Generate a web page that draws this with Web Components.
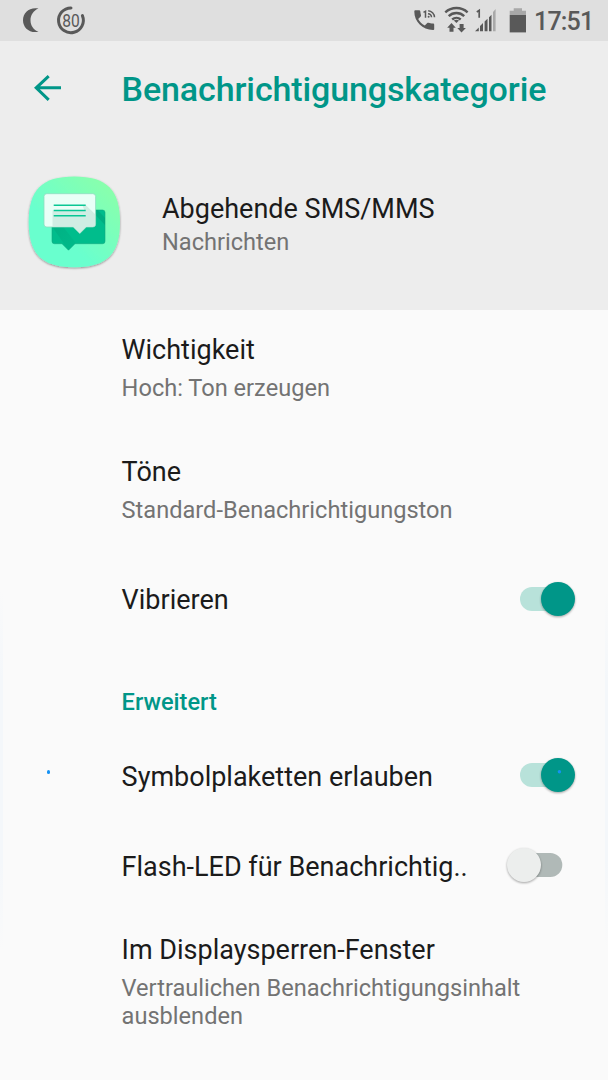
<!DOCTYPE html>
<html lang="de">
<head>
<meta charset="utf-8">
<title>Benachrichtigungskategorie</title>
<style>
    body {
        margin: 0;
        background-color: #fafafa;
        color: #1b1b1b;
        font-family: Roboto, "Liberation Sans", sans-serif;
    }
</style>
</head>
<body>
<settings-page>
    <status-bar slot="header" time="17:51" battery="80"></status-bar>
    <tool-bar slot="header">Benachrichtigungskategorie</tool-bar>
    <app-info slot="header" name="Abgehende SMS/MMS" app="Nachrichten"></app-info>

    <setting-row style="--height: 121px; --text-top: 22px" label="Wichtigkeit">Hoch: Ton erzeugen</setting-row>
    <setting-row style="--height: 118px; --text-top: 23px" label="Töne">Standard-Benachrichtigungston</setting-row>
    <setting-row style="--height: 102px; --text-top: 33px" label="Vibrieren"><toggle-switch slot="action" checked></toggle-switch></setting-row>
    <section-title>Erweitert</section-title>
    <setting-row style="--height: 90px; --text-top: 28px; --action-shift: -1px" label="Symbolplaketten erlauben"><toggle-switch slot="action" checked dot></toggle-switch></setting-row>
    <setting-row style="--height: 90px; --text-top: 28px; --action-shift: -1px" label="Flash-LED für Benachrichtig.."><toggle-switch slot="action"></toggle-switch></setting-row>
    <setting-row style="--height: 169px; --text-top: 21px" label="Im Displaysperren-Fenster">Vertraulichen Benachrichtigungsinhalt ausblenden</setting-row>
</settings-page>

<script>
class SettingsPage extends HTMLElement {

    constructor() {
        super();
        this.shadowDOM = this.attachShadow({ mode: "open" });
    }

    connectedCallback() {
        this.shadowDOM.innerHTML = `
        <style>
            :host {
                display: block;
                position: relative;
                width: 608px;
                height: 1080px;
                overflow: hidden;
            }
            header {
                height: 310px;
                background-color: #ededed;
            }
            .dot {
                position: absolute;
                left: 46.5px;
                top: 770px;
                width: 3.5px;
                height: 3.5px;
                border-radius: 50%;
                background-color: #1592f5;
            }
            .edge {
                position: absolute;
                top: 590px;
                left: 0;
                width: 3px;
                height: 360px;
                background: linear-gradient(transparent, #f4f7fa 25%, #f4f7fa 75%, transparent);
            }
            .edge.right {
                left: auto;
                right: 0;
            }
        </style>
        <header><slot name="header"></slot></header>
        <main><slot></slot></main>
        <span class="edge"></span>
        <span class="edge right"></span>
        <span class="dot"></span>`;
    }
}

class StatusBar extends HTMLElement {

    constructor() {
        super();
        this.shadowDOM = this.attachShadow({ mode: "open" });
    }

    connectedCallback() {
        this.shadowDOM.innerHTML = `
        <style>
            :host {
                display: flex;
                justify-content: space-between;
                box-sizing: border-box;
                height: 41px;
                padding-right: 14px;
                background-color: #dfdfdf;
                color: #595959;
            }
            div {
                display: flex;
            }
            svg {
                display: block;
            }
            .time {
                width: 60px;
                font-size: 25px;
                font-weight: 500;
                line-height: 43px;
                letter-spacing: -0.8px;
                white-space: nowrap;
            }
        </style>
        <div>
            <svg width="100" height="41" viewBox="0 0 100 41" fill="#595959">
                <path d="M38.5 8.6C29.5 6.8 23 12.8 23 20.2s6.5 13.4 15.5 11.6C33.5 29.800 30.500 25.300 30.500 20.200S33.500 10.600 38.500 8.600z"/>
                <path d="M71 7.900A12.400 12.400 0 1 0 82.400 15.600" fill="none" stroke="#595959" stroke-width="3" stroke-linecap="round"/>
                <text x="70.900" y="27" font-family="Roboto" font-size="18.500" text-anchor="middle" textLength="17.500" lengthAdjust="spacingAndGlyphs">${this.getAttribute("battery")}</text>
            </svg>
        </div>
        <div>
            <!-- call, wifi, signal and battery -->
            <svg width="134" height="41" viewBox="400 0 134 41" fill="#595959">
                <path d="M415.5 10.3h3.7c.6 0 1 .4 1.1 1 .1 1.5.3 2.7.7 4 .1.4 0 .9-.3 1.2l-2.500 2.500c1.600 3.100 3.500 5 6.600 6.500l2.500-2.500c.3-.3.7-.4 1.200-.3 1.300.4 2.500.6 4.500.8.7 0 1.200.5 1.200 1.100v4.300c0 .7-.5 1.200-1.200 1.200-10.500 0-18.700-8.300-18.700-18.500 0-.8.5-1.300 1.200-1.300z"/>
                <path d="M423.500 12.300l2-1.100v6.600M428 13.800a3.700 3.700 0 0 1 3.500 3.500M428.200 10.800a6.800 6.800 0 0 1 6.300 6.500" fill="none" stroke="#595959" stroke-width="1.500"/>
                <circle cx="428.600" cy="16.800" r="1"/>
                <g fill="none" stroke="#595959" stroke-width="2.400">
                    <path d="M445.300 12.300a16.500 16.500 0 0 1 22.300 0"/>
                    <path d="M448.700 16.100a11.300 11.300 0 0 1 15.500 0"/>
                    <path d="M452.200 19.500a6.400 6.400 0 0 1 8.500 0"/>
                </g>
                <path d="M453.800 20.600q2.600-1.700 5.200 0l-2.600 2.500z"/>
                <path d="M451.500 23l4.300 4.800h-2.300v4h-4v-4h-2.300zM461.500 32.500l-4.200-4.600h2.300v-4h4v4h2.300z"/>
                <path d="M476.800 12l2.400-1.600v7.300" fill="none" stroke="#595959" stroke-width="1.700"/>
                <path d="M475 31.300l3.800-3.800v3.800zM480 31.300v-5.200l3-3v8.200zM484.600 31.300v-9.700l2.900-2.900v12.600zM489 31.300V17.200l2.500-2.500v16.600z"/>
                <path d="M493 31.300V12l2.600-3v22.300z" fill="#a9a9a9"/>
                <path d="M513.700 8.200h8.300v2.500h4V15h-16.300v-4.300h4z" fill="#a8a8a8"/>
                <path d="M509.700 15H526v17.400h-16.300z"/>
            </svg>
            <span class="time">${this.getAttribute("time")}</span>
        </div>`;
    }
}

class ToolBar extends HTMLElement {

    constructor() {
        super();
        this.shadowDOM = this.attachShadow({ mode: "open" });
    }

    connectedCallback() {
        this.shadowDOM.innerHTML = `
        <style>
            :host {
                display: flex;
                align-items: center;
                height: 96px;
                padding-left: 34px;
                color: #009688;
            }
            h1 {
                margin: 0 0 0 59.6px;
                font-size: 34px;
                font-weight: 500;
                line-height: 40px;
                letter-spacing: -0.12px;
                white-space: nowrap;
            }
        </style>
        <svg width="28" height="28" viewBox="0 0 28 28" fill="none" stroke="#009688" stroke-width="3">
            <path d="M27 12.800H2.500M14.700 1.200L2.200 12.800l12.500 12"/>
        </svg>
        <h1><slot></slot></h1>`;
    }
}

class AppInfo extends HTMLElement {

    constructor() {
        super();
        this.shadowDOM = this.attachShadow({ mode: "open" });
    }

    connectedCallback() {
        this.shadowDOM.innerHTML = `
        <style>
            :host {
                display: flex;
                align-items: flex-start;
                box-sizing: border-box;
                height: 173px;
                padding: 36px 0 0 26px;
            }
            svg {
                display: block;
            }
            .text {
                margin: 18px 0 0 40px;
                white-space: nowrap;
            }
            .name {
                font-size: 27px;
                line-height: 36px;
            }
            .app {
                margin-top: 1px;
                font-size: 23.6px;
                line-height: 28px;
                color: #737373;
            }
        </style>
        <svg width="96" height="98" viewBox="26 173 96 98">
            <defs>
                <linearGradient id="plate" x1="0" y1="1" x2="1" y2="0">
                    <stop offset=".35" stop-color="#69ffce"/>
                    <stop offset=".9" stop-color="#8affab"/>
                </linearGradient>
                <linearGradient id="shade" x1="0" y1="0" x2="1" y2="1">
                    <stop offset="0" stop-color="#007a5c" stop-opacity=".45"/>
                    <stop offset="1" stop-color="#007a5c" stop-opacity=".1"/>
                </linearGradient>
                <filter id="drop" x="-10%" y="-10%" width="120%" height="120%">
                    <feDropShadow dx="0" dy="1" stdDeviation=".8" flood-color="#000" flood-opacity=".4"/>
                </filter>
            </defs>
            <path d="M74.3 176.5C107 176.5 120 190 120 222s-13 45.3-45.7 45.3S28.7 254 28.7 222s13-45.5 45.6-45.5z" fill="url(#plate)" filter="url(#drop)"/>
            <path d="M54.500 210h48a2.500 2.500 0 0 1 2.500 2.500v28.700a2.500 2.500 0 0 1-2.500 2.500H75l-6.500 6.500-6.500-6.500h-7.500a2.500 2.500 0 0 1-2.500-2.500V212.500a2.500 2.500 0 0 1 2.500-2.500z" fill="#00bd8c" stroke="#12a982" stroke-width=".6"/>
            <path d="M52.300 227v-14l24 30.500h-1.500l-6.500 6.500z" fill="url(#shade)" opacity=".45"/>
            <path d="M95.500 210h2l7.500 8v7l-9.500-10z" fill="#009b73" opacity=".45"/>
            <path d="M46.800 193.700h46a2.800 2.800 0 0 1 2.800 2.800v27.700a2.800 2.800 0 0 1-2.800 2.800h-6.500l-6.500 6.500-6.500-6.500H46.800a2.800 2.800 0 0 1-2.800-2.800v-27.700a2.800 2.800 0 0 1 2.800-2.800z" fill="#e9fff7" stroke="#8fdcc0" stroke-width=".8"/>
            <path d="M52.500 210.500h32l-2-5 3.200-.5 9.500 9.200v10a2.500 2.500 0 0 1-2.500 2.500h-6.500l-6.500 6.500-6.500-6.500H52.500z" fill="#c9e9dd" opacity=".8"/>
            <path d="M53.700 205.300h32M53.700 210.500h32M53.700 215.700h32" stroke="#08c794" stroke-width="1.500"/>
        </svg>
        <div class="text">
            <div class="name">${this.getAttribute("name")}</div>
            <div class="app">${this.getAttribute("app")}</div>
        </div>`;
    }
}

class SettingRow extends HTMLElement {

    constructor() {
        super();
        this.shadowDOM = this.attachShadow({ mode: "open" });
    }

    connectedCallback() {
        this.shadowDOM.innerHTML = `
        <style>
            :host {
                display: flex;
                justify-content: space-between;
                box-sizing: border-box;
                height: var(--height);
                padding: var(--text-top) 28px 0 121.6px;
            }
            .label {
                font-size: 27px;
                line-height: 36px;
                white-space: nowrap;
            }
            .summary {
                width: 420px;
                margin-top: 6px;
                font-size: 23.6px;
                line-height: 28px;
                color: #737373;
            }
        </style>
        <div>
            <div class="label">${this.getAttribute("label")}</div>
            <div class="summary"><slot></slot></div>
        </div>
        <slot name="action"></slot>`;
    }
}

class SectionTitle extends HTMLElement {

    constructor() {
        super();
        this.shadowDOM = this.attachShadow({ mode: "open" });
    }

    connectedCallback() {
        this.shadowDOM.innerHTML = `
        <style>
            :host {
                display: block;
                box-sizing: border-box;
                height: 80px;
                padding: 37px 0 0 121.6px;
                font-size: 23.6px;
                font-weight: 500;
                line-height: 28px;
                color: #009688;
            }
        </style>
        <slot></slot>`;
    }
}

class ToggleSwitch extends HTMLElement {

    constructor() {
        super();
        this.shadowDOM = this.attachShadow({ mode: "open" });
    }

    connectedCallback() {
        const on = this.hasAttribute("checked");
        const knob = on ? 62 : 28;
        this.shadowDOM.innerHTML = `
        <style>
            :host {
                display: block;
                flex: none;
                width: 84px;
                height: 40px;
                margin: var(--action-shift, -0.5px) 0 0 -84px;
            }
            svg {
                display: block;
                overflow: visible;
            }
            .knob {
                filter: drop-shadow(0 1.5px 1.2px rgba(0, 0, 0, 0.35));
            }
        </style>
        <svg width="84" height="40" viewBox="0 0 84 40">
            <rect x="${on ? 24 : 22}" y="5" width="${on ? 46 : 44.3}" height="24" rx="12" fill="${on ? "#b8e2da" : "#b0b9b7"}"/>
            <circle class="knob" cx="${knob}" cy="17" r="17" fill="${on ? "#009688" : "#eceeed"}"/>
            ${this.hasAttribute("dot") ? `<circle cx="63.4" cy="13.7" r="1.7" fill="#1592f5"/>` : ""}
        </svg>`;
    }
}

customElements.define("settings-page", SettingsPage);
customElements.define("status-bar", StatusBar);
customElements.define("tool-bar", ToolBar);
customElements.define("app-info", AppInfo);
customElements.define("setting-row", SettingRow);
customElements.define("section-title", SectionTitle);
customElements.define("toggle-switch", ToggleSwitch);
</script>
</body>
</html>
